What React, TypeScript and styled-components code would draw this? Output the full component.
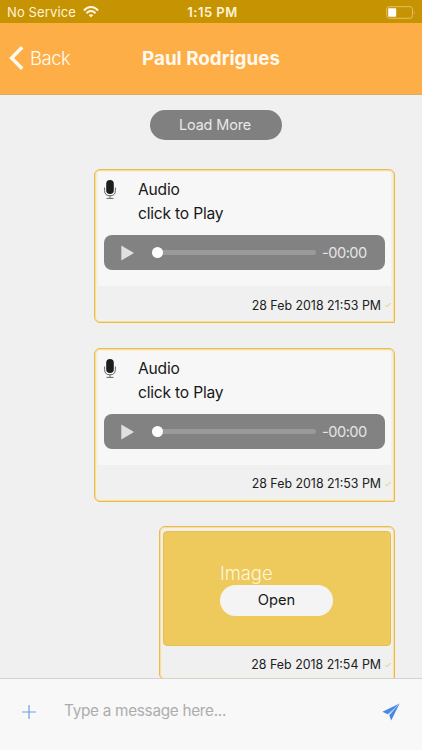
import React from 'react';
import styled, { createGlobalStyle } from 'styled-components';

const Global = createGlobalStyle`
  * { box-sizing: border-box; }
  body { margin: 0; font-family: Inter, "Liberation Sans", sans-serif; background: #f0f0f0; }
  button, input { font-family: inherit; }
  svg { display: block; flex: none; }
`;

const Screen = styled.div`
  width: 422px;
  height: 750px;
  display: flex;
  flex-direction: column;
  overflow: hidden;
  background: #f0f0f1;
`;

const StatusBar = styled.div`
  height: 23px;
  flex: none;
  display: grid;
  grid-template-columns: 1fr auto 1fr;
  align-items: center;
  padding: 1px 6px 0 7px;
  background: #c69303;
  color: #fff3d8;
  font-size: 13px;
  line-height: 22px;
`;

const Carrier = styled.div`
  display: flex;
  align-items: center;
  gap: 7px;
  letter-spacing: 0.12px;
`;

const Clock = styled.div`
  padding-left: 2px;
  font-weight: 600;
  letter-spacing: 0.5px;
`;

const BatteryWrap = styled.div`
  display: flex;
  justify-content: flex-end;
`;

const Header = styled.header`
  height: 72px;
  flex: none;
  display: grid;
  grid-template-columns: 1fr auto 1fr;
  align-items: center;
  padding: 0 9px 1px;
  background: #fdae47;
  border-bottom: 1px solid #d9ab6c;
  color: #fffaf0;
`;

const Back = styled.button`
  display: flex;
  align-items: center;
  gap: 6px;
  padding: 0;
  border: 0;
  background: none;
  color: inherit;
  font-size: 18.5px;
  font-weight: 350;
  letter-spacing: -0.5px;
`;

const Title = styled.h1`
  margin: 0;
  font-size: 18.8px;
  font-weight: 700;
  letter-spacing: 0.02px;
`;

const Messages = styled.main`
  flex: 1;
  min-height: 0;
  overflow: hidden;
  display: flex;
  flex-direction: column;
  align-items: flex-end;
  padding: 15px 27px 0;
`;

const LoadMore = styled.button`
  width: 132px;
  height: 30px;
  flex: none;
  margin: 0 113px 29px 0;
  padding: 0 2px 1px 0;
  border: 0;
  border-radius: 15px;
  background: #808080;
  color: #e9e9e9;
  font-size: 14.4px;
  letter-spacing: -0.1px;
`;

const Bubble = styled.article<{ $width: number; $gap: number }>`
  width: ${(p) => p.$width}px;
  height: 154px;
  flex: none;
  margin-bottom: ${(p) => p.$gap}px;
  padding: 2px;
  border: 1px solid #e8bb4a;
  border-radius: 6px 6px 0 6px;
  box-shadow: inset 0 0 0 1px #f5dfa4, inset 0 0 0 2px #f7efdc;
`;

const AudioBody = styled.div`
  height: 114px;
  margin: 0 1px;
  padding: 5px 6px 0;
  background: #f7f7f7;
`;

const AudioInfo = styled.div`
  display: flex;
  height: 58px;
`;

const MicSlot = styled.div`
  width: 34px;
  padding-top: 3px;
`;

const AudioLabel = styled.div`
  padding-top: 1px;
  color: #181818;
  font-size: 15.6px;
  line-height: 23.7px;
  letter-spacing: -0.2px;
`;

const Player = styled.div`
  height: 35px;
  display: flex;
  align-items: center;
  padding: 0 17px;
  border-radius: 8px;
  background: #828282;
  color: #e6e6e6;
`;

const Track = styled.div`
  width: 164px;
  height: 5px;
  margin: 0 6px 0 18px;
  display: flex;
  align-items: center;
  border-radius: 3px;
  background: #9a9a9a;
`;

const Knob = styled.div`
  width: 11px;
  height: 11px;
  border-radius: 50%;
  background: #fff;
`;

const Remaining = styled.span`
  white-space: nowrap;
  font-size: 14.6px;
  letter-spacing: -0.5px;
`;

const Meta = styled.footer<{ $top: number }>`
  display: flex;
  align-items: center;
  justify-content: flex-end;
  gap: 4px;
  height: 36px;
  padding: ${(p) => p.$top}px 1px 0 0;
  color: #202020;
  font-size: 12.4px;
`;

const ImagePreview = styled.div`
  height: 115px;
  margin: 2px 1px 0;
  display: flex;
  flex-direction: column;
  padding: 30px 0 0 56px;
  border: 1px solid #e6bf50;
  border-radius: 4px;
  background: #eec95c;
`;

const ImageLabel = styled.div`
  color: #fcf6dc;
  font-size: 18.5px;
  font-weight: 350;
  line-height: 23px;
  letter-spacing: -0.1px;
`;

const OpenButton = styled.button`
  width: 113px;
  height: 31px;
  padding: 0 0 1px;
  border: 0;
  border-radius: 16px;
  background: #f4f4f4;
  color: #181818;
  font-size: 14.7px;
`;

const Composer = styled.form`
  height: 72px;
  flex: none;
  display: flex;
  align-items: center;
  padding: 0 22px 6px;
  border-top: 1px solid #d2d2d2;
  background: #f8f8f8;
`;

const IconButton = styled.button`
  padding: 0;
  border: 0;
  background: none;
`;

const MessageInput = styled.input`
  flex: 1;
  min-width: 0;
  margin: 0 20px 2px 28px;
  padding: 0;
  border: 0;
  outline: 0;
  background: none;
  font-size: 15.3px;
  letter-spacing: -0.28px;
  &::placeholder { color: #adadad; opacity: 1; }
`;

const WifiIcon = () => (
  <svg width="16" height="12" viewBox="0 0 16 12" fill="none" stroke="#fff6df" strokeWidth="2">
    <path d="M0.9 4.5C5-.1 11-.1 15.1 4.5" />
    <path d="M3.5 7.2C6.2 4.4 9.8 4.4 12.5 7.2" />
    <path d="M5.7 9.1C7.1 7.8 8.9 7.8 10.3 9.1L8 11.6Z" fill="#fff6df" stroke="none" />
  </svg>
);

const BatteryIcon = () => (
  <svg width="30" height="13" viewBox="0 0 30 13">
    <rect x=".7" y=".7" width="25.8" height="11.6" rx="2.5" fill="none" stroke="#e2c06a" />
    <rect x="2.2" y="2.2" width="8" height="8.6" rx=".7" fill="#fff" />
    <path d="M28 4.6Q29.6 6.5 28 8.4Z" fill="#e2c06a" />
  </svg>
);

const BackIcon = () => (
  <svg width="15" height="24" viewBox="0 0 15 24" fill="none" stroke="#fffaf0" strokeWidth="3.5">
    <path d="M13.2 1.3L2.6 12L13.2 22.7" />
  </svg>
);

const MicIcon = () => (
  <svg width="12" height="20" viewBox="0 0 12 20" fill="none" stroke="#666" strokeWidth="1">
    <rect x="2.2" y="0" width="7.6" height="14" rx="3.8" fill="#1d1d1d" stroke="none" />
    <path d="M.6 7.5V10.6Q.6 15.8 6 15.8Q11.4 15.8 11.4 10.6V7.5M6 15.8V18.3M2.5 18.4H9.5" />
  </svg>
);

const PlayIcon = () => (
  <svg width="13" height="16" viewBox="0 0 13 16"><path d="M.3.5L13 8L.3 15.5Z" fill="#e0e0e0" /></svg>
);

const CheckIcon = () => (
  <svg width="6" height="6" viewBox="0 0 6 6" fill="none" stroke="#e8c66e" strokeWidth="1">
    <path d="M.4 3.1L2 4.7L5.7 1" />
  </svg>
);

const PlusIcon = () => (
  <svg width="14" height="14" viewBox="0 0 14 14" stroke="#6f9fe7" strokeWidth="1.2">
    <path d="M0 7H14M7 0V14" />
  </svg>
);

const SendIcon = () => (
  <svg width="18" height="18" viewBox="0 0 18 18" fill="#4688e8">
    <path d="M17.6.4L.4 8.7L5.7 11.2L15.6 2.6L7.3 12.2L9.2 17.6Z" />
    <path d="M16.6 1.4L6.6 11.4" stroke="#a9c8f3" strokeWidth=".9" />
  </svg>
);

const AudioMessage = ({ time, gap, top }: { time: string; gap: number; top: number }) => (
  <Bubble $width={301} $gap={gap}>
    <AudioBody>
      <AudioInfo>
        <MicSlot><MicIcon /></MicSlot>
        <AudioLabel>Audio<br />click to Play</AudioLabel>
      </AudioInfo>
      <Player>
        <PlayIcon />
        <Track><Knob /></Track>
        <Remaining>-00:00</Remaining>
      </Player>
    </AudioBody>
    <Meta $top={top}>{time}<CheckIcon /></Meta>
  </Bubble>
);

export default function App() {
  return (
    <>
      <Global />
      <Screen>
        <StatusBar>
          <Carrier>No Service <WifiIcon /></Carrier>
          <Clock>1:15 PM</Clock>
          <BatteryWrap><BatteryIcon /></BatteryWrap>
        </StatusBar>
        <Header>
          <Back><BackIcon />Back</Back>
          <Title>Paul Rodrigues</Title>
        </Header>
        <Messages>
          <LoadMore>Load More</LoadMore>
          <AudioMessage time="28 Feb 2018 21:53 PM" gap={25} top={2} />
          <AudioMessage time="28 Feb 2018 21:53 PM" gap={24} top={1} />
          <Bubble $width={236} $gap={0}>
            <ImagePreview>
              <ImageLabel>Image</ImageLabel>
              <OpenButton>Open</OpenButton>
            </ImagePreview>
            <Meta $top={1}>28 Feb 2018 21:54 PM<CheckIcon /></Meta>
          </Bubble>
        </Messages>
        <Composer>
          <IconButton type="button" aria-label="Attach"><PlusIcon /></IconButton>
          <MessageInput placeholder="Type a message here..." />
          <IconButton type="button" aria-label="Send"><SendIcon /></IconButton>
        </Composer>
      </Screen>
    </>
  );
}
